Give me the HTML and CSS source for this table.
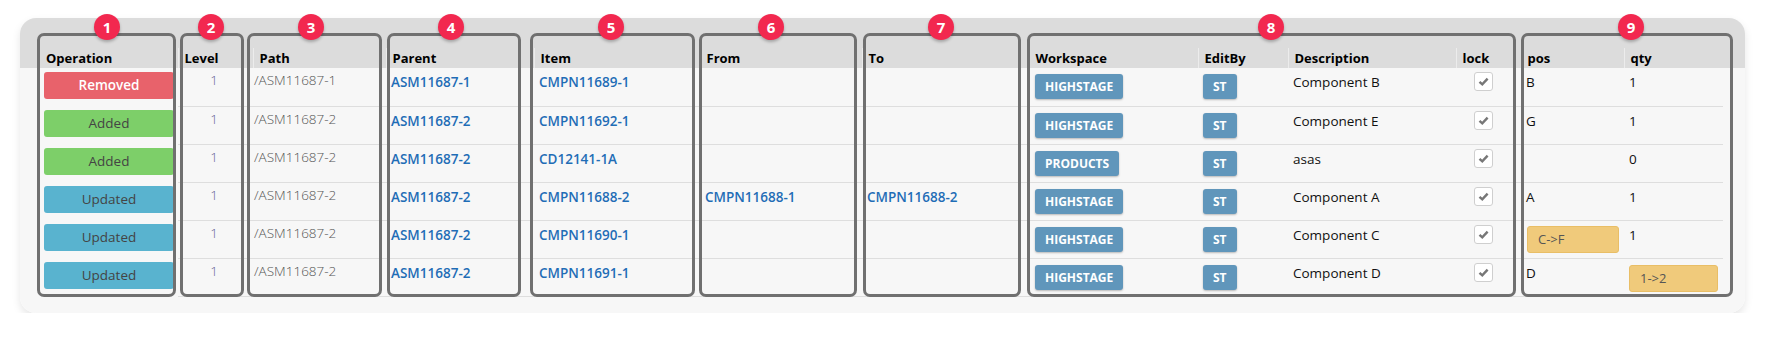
FILE: index.html
```html
<!DOCTYPE html>
<html lang="en">
<head>
<meta charset="utf-8">
<title>Compare grid</title>
<link rel="stylesheet" href="styles.css">
</head>
<body>
<div class="card">
  <table class="grid">
    <colgroup>
      <col class="w-op"><col class="w-level"><col class="w-path"><col class="w-parent"><col class="w-item"><col class="w-from"><col class="w-to"><col class="w-ws"><col class="w-edit"><col class="w-desc"><col class="w-lock"><col class="w-pos"><col class="w-qty">
    </colgroup>
    <thead>
      <tr>
        <th class="first">Operation</th><th>Level</th><th>Path</th><th>Parent</th><th>Item</th><th>From</th><th>To</th><th>Workspace</th><th>EditBy</th><th>Description</th><th>lock</th><th>pos</th><th>qty</th>
      </tr>
    </thead>
    <tbody>
      <tr>
        <td class="op"><span class="opbtn removed">Removed</span></td>
        <td class="level">1</td><td class="path">/ASM11687-1</td>
        <td><a class="lnk">ASM11687-1</a></td><td><a class="lnk">CMPN11689-1</a></td><td></td><td></td>
        <td class="ws"><span class="tag">HIGHSTAGE</span></td><td class="eb"><span class="tag">ST</span></td>
        <td>Component B</td><td class="lock"><span class="chk"><svg viewBox="0 0 19 19" width="19" height="19"><path d="M5.5 9.8 L8.3 12.4 L13.6 6.6" fill="none" stroke="#777" stroke-width="2.4"/></svg></span></td>
        <td>B</td><td>1</td>
      </tr>
      <tr>
        <td class="op"><span class="opbtn added">Added</span></td>
        <td class="level">1</td><td class="path">/ASM11687-2</td>
        <td><a class="lnk">ASM11687-2</a></td><td><a class="lnk">CMPN11692-1</a></td><td></td><td></td>
        <td class="ws"><span class="tag">HIGHSTAGE</span></td><td class="eb"><span class="tag">ST</span></td>
        <td>Component E</td><td class="lock"><span class="chk"><svg viewBox="0 0 19 19" width="19" height="19"><path d="M5.5 9.8 L8.3 12.4 L13.6 6.6" fill="none" stroke="#777" stroke-width="2.4"/></svg></span></td>
        <td>G</td><td>1</td>
      </tr>
      <tr>
        <td class="op"><span class="opbtn added">Added</span></td>
        <td class="level">1</td><td class="path">/ASM11687-2</td>
        <td><a class="lnk">ASM11687-2</a></td><td><a class="lnk">CD12141-1A</a></td><td></td><td></td>
        <td class="ws"><span class="tag">PRODUCTS</span></td><td class="eb"><span class="tag">ST</span></td>
        <td>asas</td><td class="lock"><span class="chk"><svg viewBox="0 0 19 19" width="19" height="19"><path d="M5.5 9.8 L8.3 12.4 L13.6 6.6" fill="none" stroke="#777" stroke-width="2.4"/></svg></span></td>
        <td></td><td>0</td>
      </tr>
      <tr>
        <td class="op"><span class="opbtn updated">Updated</span></td>
        <td class="level">1</td><td class="path">/ASM11687-2</td>
        <td><a class="lnk">ASM11687-2</a></td><td><a class="lnk">CMPN11688-2</a></td><td><a class="lnk">CMPN11688-1</a></td><td><a class="lnk">CMPN11688-2</a></td>
        <td class="ws"><span class="tag">HIGHSTAGE</span></td><td class="eb"><span class="tag">ST</span></td>
        <td>Component A</td><td class="lock"><span class="chk"><svg viewBox="0 0 19 19" width="19" height="19"><path d="M5.5 9.8 L8.3 12.4 L13.6 6.6" fill="none" stroke="#777" stroke-width="2.4"/></svg></span></td>
        <td>A</td><td>1</td>
      </tr>
      <tr>
        <td class="op"><span class="opbtn updated">Updated</span></td>
        <td class="level">1</td><td class="path">/ASM11687-2</td>
        <td><a class="lnk">ASM11687-2</a></td><td><a class="lnk">CMPN11690-1</a></td><td></td><td></td>
        <td class="ws"><span class="tag">HIGHSTAGE</span></td><td class="eb"><span class="tag">ST</span></td>
        <td>Component C</td><td class="lock"><span class="chk"><svg viewBox="0 0 19 19" width="19" height="19"><path d="M5.5 9.8 L8.3 12.4 L13.6 6.6" fill="none" stroke="#777" stroke-width="2.4"/></svg></span></td>
        <td class="chg"><span class="diff pos-diff">C-&gt;F</span></td><td>1</td>
      </tr>
      <tr>
        <td class="op"><span class="opbtn updated">Updated</span></td>
        <td class="level">1</td><td class="path">/ASM11687-2</td>
        <td><a class="lnk">ASM11687-2</a></td><td><a class="lnk">CMPN11691-1</a></td><td></td><td></td>
        <td class="ws"><span class="tag">HIGHSTAGE</span></td><td class="eb"><span class="tag">ST</span></td>
        <td>Component D</td><td class="lock"><span class="chk"><svg viewBox="0 0 19 19" width="19" height="19"><path d="M5.5 9.8 L8.3 12.4 L13.6 6.6" fill="none" stroke="#777" stroke-width="2.4"/></svg></span></td>
        <td>D</td><td class="chg"><span class="diff qty-diff">1-&gt;2</span></td>
      </tr>
    </tbody>
  </table>

  <div class="box b1"></div>
  <div class="box b2"></div>
  <div class="box b3"></div>
  <div class="box b4"></div>
  <div class="box b5"></div>
  <div class="box b6"></div>
  <div class="box b7"></div>
  <div class="box b8"></div>
  <div class="box b9"></div>

  <span class="num n1">1</span>
  <span class="num n2">2</span>
  <span class="num n3">3</span>
  <span class="num n4">4</span>
  <span class="num n5">5</span>
  <span class="num n6">6</span>
  <span class="num n7">7</span>
  <span class="num n8">8</span>
  <span class="num n9">9</span>
</div>
</body>
</html>
```

FILE: styles.css
```css
html, body {
  margin: 0;
  padding: 0;
  background: #ffffff;
}

body {
  font-family: "Open Sans", "Noto Sans", sans-serif;
  font-size: 13.5px;
  color: #111;
}

.card {
  position: relative;
  box-sizing: border-box;
  margin: 18px 0 0 20px;
  width: 1725px;
  height: 295px;
  padding: 30px 0 0 20px;
  border-radius: 16px;
  background: linear-gradient(#dcdcdc 0, #dcdcdc 50px, #f7f7f7 50px);
  box-shadow: 0 4px 8px rgba(0, 0, 0, 0.10);
}

.grid {
  table-layout: fixed;
  border-collapse: collapse;
  width: 1683px;
}

.w-op { width: 138px; }
.w-level { width: 75px; }
.w-path { width: 133px; }
.w-parent { width: 148px; }
.w-item { width: 166px; }
.w-from { width: 162px; }
.w-to { width: 167px; }
.w-ws { width: 169px; }
.w-edit { width: 90px; }
.w-desc { width: 168px; }
.w-lock { width: 65px; }
.w-pos { width: 103px; }
.w-qty { width: 99px; }

.grid th {
  height: 20px;
  padding: 0 6px;
  line-height: 20px;
  font-size: 13px;
  font-weight: 700;
  text-align: left;
  color: #000;
  border-left: 1px solid #ececec;
  white-space: nowrap;
}

.grid th.first {
  border-left: 0;
}

.grid td {
  box-sizing: border-box;
  height: 38px;
  padding: 4px 5px 0;
  line-height: 20px;
  vertical-align: top;
  border-bottom: 1px solid #dedede;
  white-space: nowrap;
}

.grid td.op {
  padding: 4px 4px 0;
  border-bottom: 0;
}

.opbtn {
  display: block;
  height: 27px;
  line-height: 27px;
  border-radius: 3px;
  text-align: center;
  font-size: 13.5px;
  color: #444;
}

.opbtn.removed {
  background: #e8626b;
  color: #fff;
  font-weight: 600;
}

.opbtn.added {
  background: #7dcf69;
}

.opbtn.updated {
  background: #59b3cf;
}

.grid td.level {
  padding: 2px 35px 0 5px;
  text-align: right;
  color: #6a6a98;
  font-weight: 300;
}

.grid td.path {
  padding: 2px 4px 0 1px;
  color: #555;
  font-weight: 300;
}

.lnk {
  color: #1f6db6;
  font-weight: 600;
  text-decoration: none;
}

.grid td.ws {
  padding: 6px 6px 0;
}

.grid td.eb {
  padding: 6px 5px 0;
}

.tag {
  display: inline-block;
  height: 25px;
  line-height: 25px;
  padding: 0 10px;
  border-radius: 3px;
  background: #6096bb;
  color: #fff;
  font-size: 12px;
  font-weight: 700;
  box-shadow: 0 1px 2px rgba(0, 0, 0, 0.25);
}

.grid td.lock {
  padding: 4px 0 0 18px;
}

.chk {
  display: block;
  box-sizing: border-box;
  width: 19px;
  height: 19px;
  border: 1px solid #cfcfcf;
  border-radius: 3px;
  background: #fff;
}

.chk svg {
  display: block;
  margin: -1px;
}

.grid td.chg {
  padding: 5px 4px 0 6px;
}

.diff {
  display: block;
  box-sizing: border-box;
  height: 27px;
  line-height: 25px;
  padding-left: 10px;
  border: 1px solid #e9be66;
  border-radius: 3px;
  background: #f0ca7b;
  color: #555;
  font-size: 13px;
}

.pos-diff {
  width: 92px;
}

.qty-diff {
  width: 89px;
  margin-top: 1px;
  margin-left: -1px;
}

/* annotation overlay */
.box {
  position: absolute;
  top: 15px;
  height: 264px;
  box-sizing: border-box;
  border: 3px solid #707070;
  border-radius: 7px;
}

.b1 { left: 17px; width: 139px; }
.b2 { left: 160px; width: 64px; }
.b3 { left: 227px; width: 135px; }
.b4 { left: 367px; width: 134px; }
.b5 { left: 510px; width: 165px; }
.b6 { left: 679px; width: 158px; }
.b7 { left: 843px; width: 158px; }
.b8 { left: 1007px; width: 489px; }
.b9 { left: 1501px; width: 212px; }

.num {
  position: absolute;
  top: -4px;
  width: 26px;
  height: 26px;
  border-radius: 50%;
  background: #f2284f;
  color: #fff;
  font-family: "Open Sans", sans-serif;
  font-size: 15px;
  font-weight: 700;
  line-height: 26px;
  text-align: center;
  box-shadow: 0 2px 3px rgba(0, 0, 0, 0.25);
}

.n1 { left: 74px; }
.n2 { left: 178px; }
.n3 { left: 278px; }
.n4 { left: 418px; }
.n5 { left: 578px; }
.n6 { left: 738px; }
.n7 { left: 908px; }
.n8 { left: 1238px; }
.n9 { left: 1598px; }
```
